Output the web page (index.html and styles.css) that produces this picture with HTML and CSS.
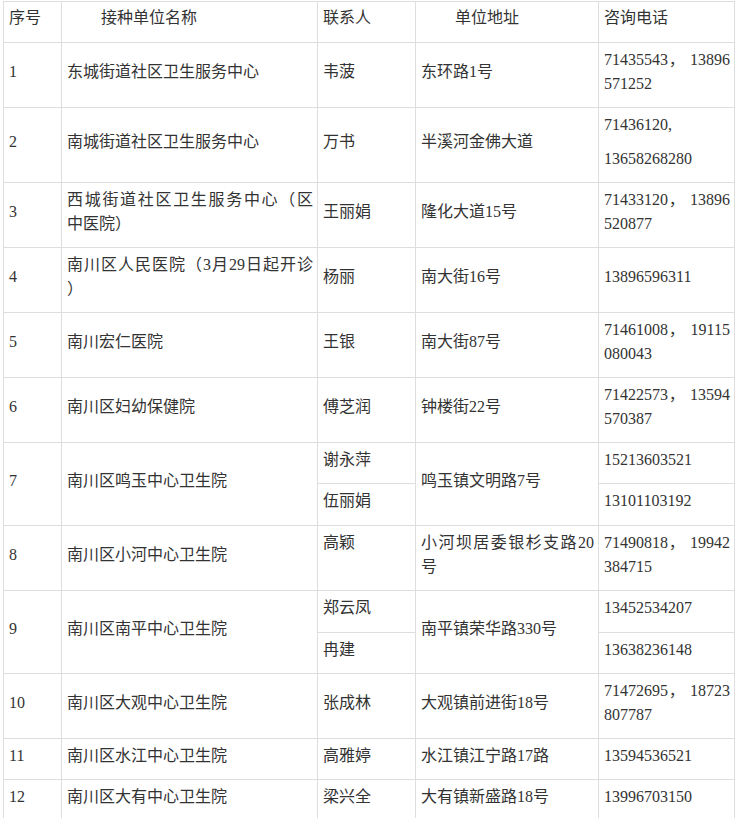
FILE: index.html
```html
<!DOCTYPE html>
<html lang="zh-CN">
<head>
<meta charset="utf-8">
<title>接种单位</title>
<link rel="stylesheet" href="styles.css">
</head>
<body>
<table class="sites">
  <colgroup>
    <col class="c-no">
    <col class="c-name">
    <col class="c-contact">
    <col class="c-addr">
    <col class="c-phone">
  </colgroup>
  <thead>
    <tr>
      <th>序号</th>
      <th class="indent">接种单位名称</th>
      <th>联系人</th>
      <th class="indent">单位地址</th>
      <th>咨询电话</th>
    </tr>
  </thead>
  <tbody>
    <tr>
      <td>1</td>
      <td>东城街道社区卫生服务中心</td>
      <td>韦菠</td>
      <td>东环路1号</td>
      <td><span class="jl">71435543， 13896</span>571252</td>
    </tr>
    <tr>
      <td>2</td>
      <td>南城街道社区卫生服务中心</td>
      <td>万书</td>
      <td>半溪河金佛大道</td>
      <td><p class="para">71436120,</p><p class="para">13658268280</p></td>
    </tr>
    <tr>
      <td>3</td>
      <td><span class="jl">西城街道社区卫生服务中心（区</span>中医院）</td>
      <td>王丽娟</td>
      <td>隆化大道15号</td>
      <td><span class="jl">71433120， 13896</span>520877</td>
    </tr>
    <tr>
      <td>4</td>
      <td><span class="jl">南川区人民医院（3月29日起开诊</span>）</td>
      <td>杨丽</td>
      <td>南大街16号</td>
      <td>13896596311</td>
    </tr>
    <tr>
      <td>5</td>
      <td>南川宏仁医院</td>
      <td>王银</td>
      <td>南大街87号</td>
      <td><span class="jl">71461008， 19115</span>080043</td>
    </tr>
    <tr>
      <td>6</td>
      <td>南川区妇幼保健院</td>
      <td>傅芝润</td>
      <td>钟楼街22号</td>
      <td><span class="jl">71422573， 13594</span>570387</td>
    </tr>
    <tr>
      <td rowspan="2">7</td>
      <td rowspan="2">南川区鸣玉中心卫生院</td>
      <td>谢永萍</td>
      <td rowspan="2">鸣玉镇文明路7号</td>
      <td>15213603521</td>
    </tr>
    <tr class="tall">
      <td>伍丽娟</td>
      <td>13101103192</td>
    </tr>
    <tr>
      <td>8</td>
      <td>南川区小河中心卫生院</td>
      <td class="top">高颖</td>
      <td><span class="jl">小河坝居委银杉支路20</span>号</td>
      <td><span class="jl">71490818， 19942</span>384715</td>
    </tr>
    <tr class="tall">
      <td rowspan="2">9</td>
      <td rowspan="2">南川区南平中心卫生院</td>
      <td>郑云凤</td>
      <td rowspan="2">南平镇荣华路330号</td>
      <td>13452534207</td>
    </tr>
    <tr>
      <td>冉建</td>
      <td>13638236148</td>
    </tr>
    <tr>
      <td>10</td>
      <td>南川区大观中心卫生院</td>
      <td>张成林</td>
      <td>大观镇前进街18号</td>
      <td><span class="jl">71472695， 18723</span>807787</td>
    </tr>
    <tr>
      <td>11</td>
      <td>南川区水江中心卫生院</td>
      <td>高雅婷</td>
      <td>水江镇江宁路17路</td>
      <td>13594536521</td>
    </tr>
    <tr>
      <td>12</td>
      <td>南川区大有中心卫生院</td>
      <td>梁兴全</td>
      <td>大有镇新盛路18号</td>
      <td>13996703150</td>
    </tr>
  </tbody>
</table>
</body>
</html>
```

FILE: styles.css
```css
html, body {
  margin: 0;
  padding: 0;
  background: #ffffff;
}

body {
  font-family: "Liberation Serif", "Noto Sans CJK SC", serif;
  font-size: 16px;
  color: #333333;
}

.sites {
  border-collapse: collapse;
  table-layout: fixed;
  width: 731px;
  margin: 1px 0 0 3px;
}

.c-no { width: 58px; }
.c-name { width: 256px; }
.c-contact { width: 98px; }
.c-addr { width: 183px; }
.c-phone { width: 136px; }

.sites th,
.sites td {
  border: 1px solid #dedede;
  padding: 5px 4px 11px 5px;
  line-height: 24px;
  text-align: left;
  vertical-align: middle;
  font-weight: normal;
  word-break: break-all;
}

.sites th {
  padding-top: 4px;
  padding-bottom: 12px;
}

.sites .indent {
  text-indent: 34px;
}

.sites .tall td {
  padding-bottom: 12px;
}

.sites td.top {
  vertical-align: top;
}

.jl {
  display: block;
  text-align: justify;
  text-align-last: justify;
}

.para {
  margin: 0;
}

.para + .para {
  margin-top: 10px;
}
```
